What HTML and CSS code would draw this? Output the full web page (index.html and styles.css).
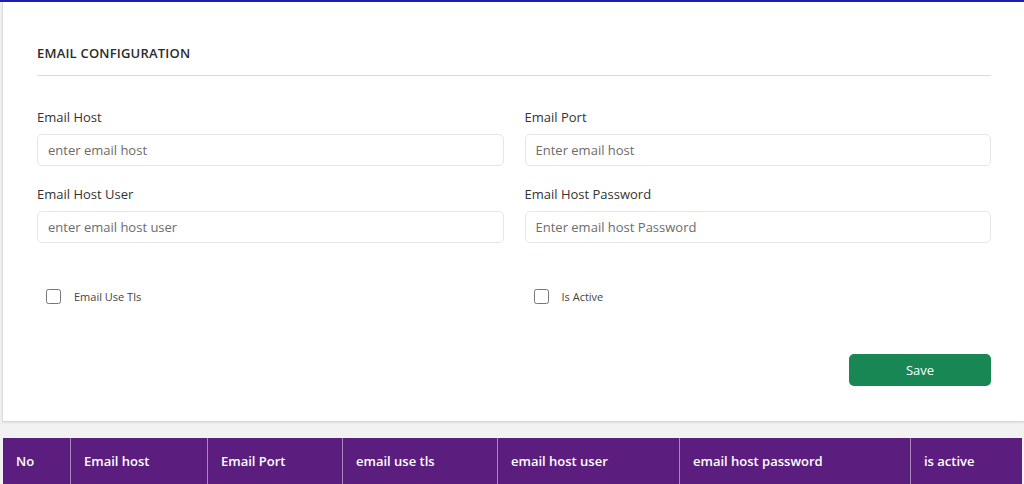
FILE: index.html
```html
<!DOCTYPE html>
<html lang="en">
<head>
    <meta charset="UTF-8">
    <meta name="viewport" content="width=device-width, initial-scale=1.0">
    <title>Email Configuration</title>
    <link rel="stylesheet" href="styles.css">
</head>
<body>
    <div class="card">
        <h2 class="card-title">EMAIL CONFIGURATION</h2>
        <hr class="divider">

        <div class="form-grid">
            <div class="form-group">
                <label for="email-host">Email Host</label>
                <input type="text" id="email-host" placeholder="enter email host">
            </div>
            <div class="form-group">
                <label for="email-port">Email Port</label>
                <input type="text" id="email-port" placeholder="Enter email host">
            </div>
            <div class="form-group">
                <label for="email-user">Email Host User</label>
                <input type="text" id="email-user" placeholder="enter email host user">
            </div>
            <div class="form-group">
                <label for="email-password">Email Host Password</label>
                <input type="password" id="email-password" placeholder="Enter email host Password">
            </div>
        </div>

        <div class="check-row">
            <label class="check"><input type="checkbox"> Email Use Tls</label>
            <label class="check"><input type="checkbox"> Is Active</label>
        </div>

        <div class="actions">
            <button class="btn-save">Save</button>
        </div>
    </div>

    <table class="config-table">
        <thead>
            <tr>
                <th class="col-no">No</th>
                <th class="col-host">Email host</th>
                <th class="col-port">Email Port</th>
                <th class="col-tls">email use tls</th>
                <th class="col-user">email host user</th>
                <th class="col-pass">email host password</th>
                <th class="col-active">is active</th>
            </tr>
        </thead>
    </table>
</body>
</html>
```

FILE: styles.css
```css
body {
    margin: 0;
    font-family: "Open Sans", "Noto Sans", Arial, sans-serif;
    background-color: #f2f2f2;
    border-top: 2px solid #1d1db0;
    color: #333;
}

.card {
    margin-left: 2px;
    background-color: white;
    border-left: 1px solid #ddd;
    border-bottom: 1px solid #d6d6d6;
    padding: 41px 33px 35px 34px;
    box-shadow: 0 1px 2px rgba(0,0,0,0.08);
}

.card-title {
    margin: 0;
    font-size: 13px;
    font-weight: 600;
    line-height: 20px;
    color: #2b2b2b;
    letter-spacing: 0.2px;
}

.divider {
    margin: 12px 0 0 0;
    border: none;
    border-top: 1px solid #dcdcdc;
}

.form-grid {
    display: grid;
    grid-template-columns: 1fr 1fr;
    column-gap: 21px;
    row-gap: 19px;
    margin-top: 32px;
}

.form-group label {
    display: block;
    font-size: 13px;
    line-height: 18px;
    margin-bottom: 8px;
    color: #333;
}

.form-group input {
    display: block;
    width: 100%;
    height: 32px;
    box-sizing: border-box;
    padding: 0 10px;
    border: 1px solid #e3e6ea;
    border-radius: 5px;
    font-family: inherit;
    font-size: 13px;
    color: #333;
}

.form-group input::placeholder {
    color: #6c6c6c;
}

.check-row {
    display: grid;
    grid-template-columns: 1fr 1fr;
    column-gap: 21px;
    margin-top: 46px;
}

.check {
    display: flex;
    align-items: center;
    gap: 13px;
    padding-left: 9px;
    font-size: 11px;
    color: #444;
}

.check input {
    margin: 0;
    width: 15px;
    height: 15px;
}

.actions {
    display: flex;
    justify-content: flex-end;
    margin-top: 50px;
}

.btn-save {
    width: 142px;
    height: 32px;
    background-color: #198754;
    color: white;
    border: none;
    border-radius: 5px;
    font-family: inherit;
    font-size: 13px;
    cursor: pointer;
}

.btn-save:hover {
    background-color: #157347;
}

.config-table {
    margin: 16px 0 0 3px;
    width: 1019px;
    border-collapse: collapse;
    background-color: #5c1e7e;
}

.config-table th {
    height: 46px;
    padding: 0 13px;
    text-align: left;
    font-size: 13px;
    font-weight: 600;
    color: white;
    border-left: 1px solid #a889b8;
}

.config-table th:first-child {
    border-left: none;
}

.col-no { width: 41px; }
.col-host { width: 110px; }
.col-port { width: 108px; }
.col-tls { width: 128px; }
.col-user { width: 155px; }
.col-pass { width: 204px; }
.col-active { width: 85px; }
```
